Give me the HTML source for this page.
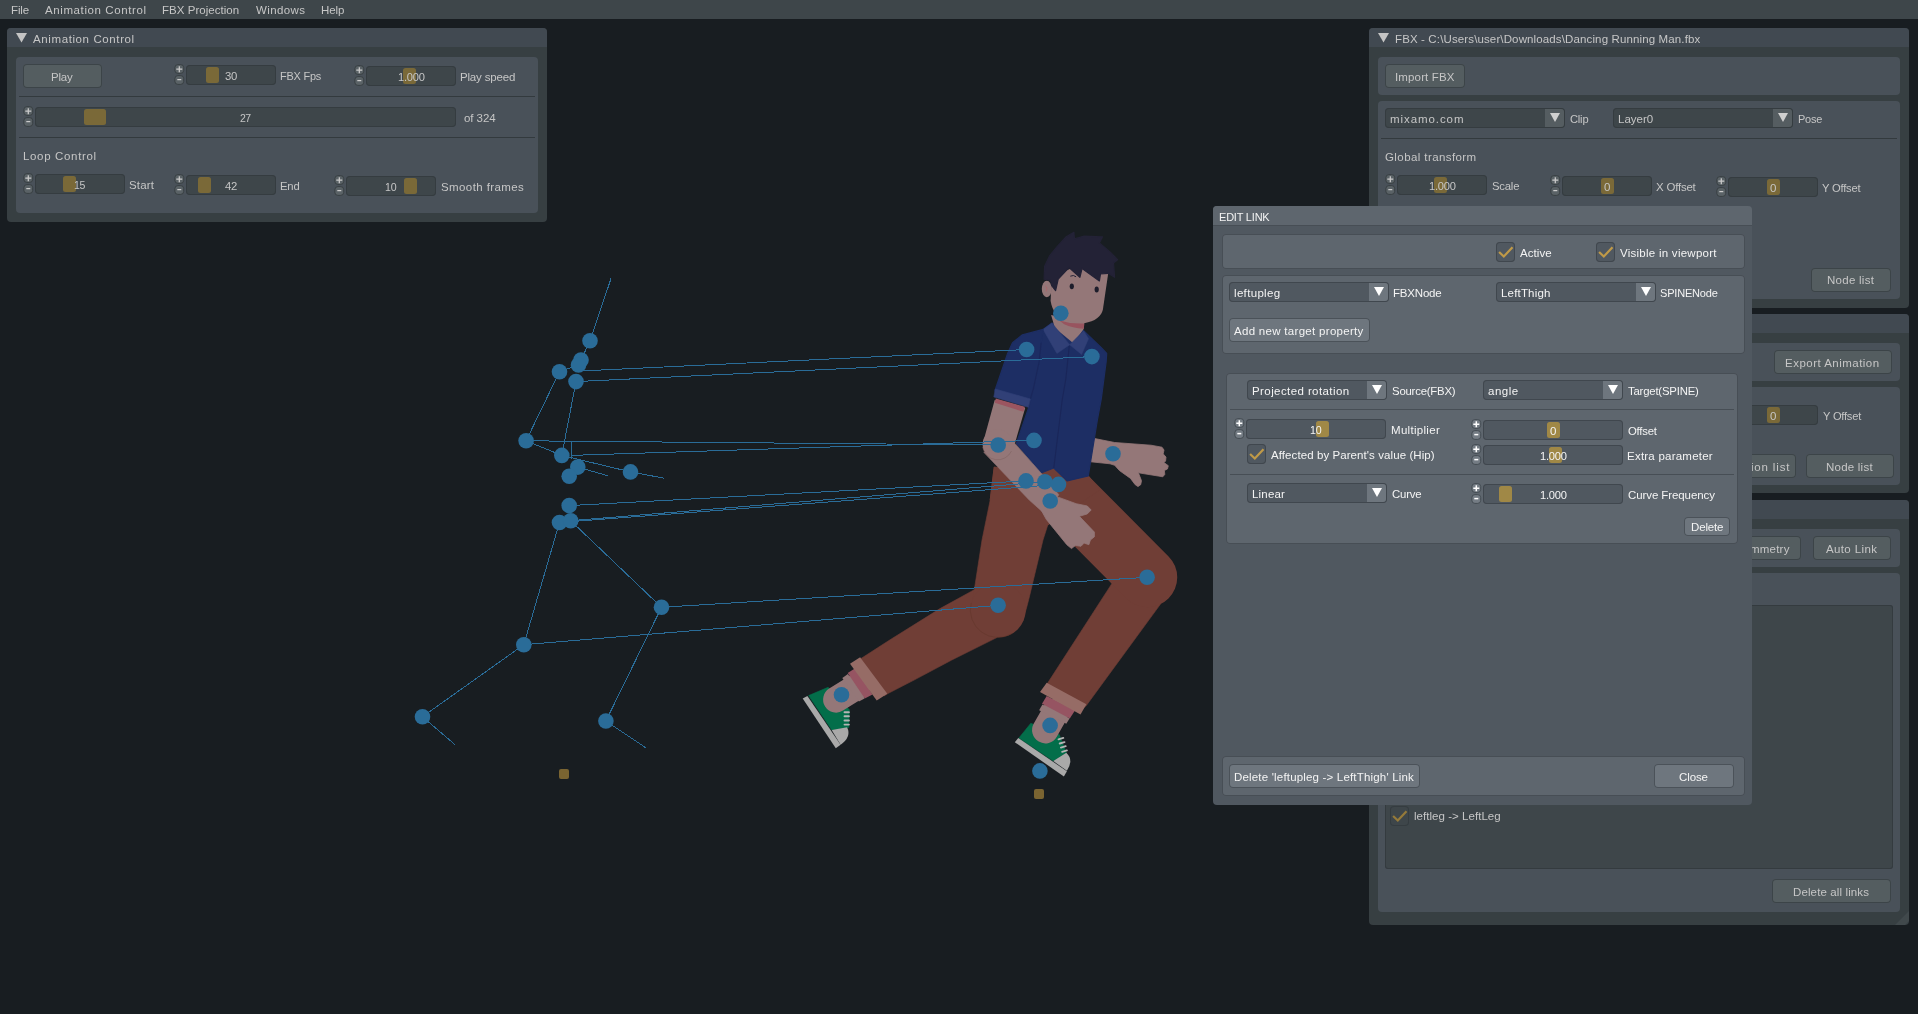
<!DOCTYPE html>
<html lang="en"><head><meta charset="utf-8"><title>FBX to Spine</title>
<style>
html,body{margin:0;padding:0;}
body{width:1918px;height:1014px;overflow:hidden;position:relative;background:#181d21;font-family:"Liberation Sans", "DejaVu Sans", sans-serif;font-size:11.5px;}
.b{position:absolute;display:block;}
.t{position:absolute;white-space:pre;line-height:16px;color:#c6c6c6;will-change:transform;}
.t.d{color:#f4f4f4;}
</style></head>
<body>
<nav aria-label="Main menu">
<div class="b" style="left:0px;top:0px;width:1918px;height:19px;background:#3e464a;"></div>
<span class="t" style="left:11.4px;top:2px;letter-spacing:-0.14px">File</span>
<span class="t" style="left:45.0px;top:2px;letter-spacing:0.60px">Animation Control</span>
<span class="t" style="left:162.3px;top:2px;letter-spacing:0.03px">FBX Projection</span>
<span class="t" style="left:256.0px;top:2px;letter-spacing:0.39px">Windows</span>
<span class="t" style="left:321.2px;top:2px;letter-spacing:-0.12px">Help</span>
</nav>
<main aria-label="Viewport">
<svg class="b" style="left:0;top:0" width="1918" height="1014" viewBox="0 0 1918 1014">
<polygon points="1094.6,438.5 1114.7,442.5 1151,445.2 1162,447.2 1164,450 1163.2,453.9 1166,457.1 1165.6,461 1164,462.6 1168.3,465.7 1167.5,468.9 1164.4,470.5 1164.8,474.4 1162.8,476.8 1158.1,476 1138.4,472.8 1141.5,480.7 1140.7,484.7 1138,486.6 1135.2,484.7 1130.5,478.4 1119.4,470.5 1114.7,465.3 1110,463.8 1088,461.5 1090,438" fill="#947778" stroke="#947778" stroke-width="0.8" stroke-linejoin="round" />
<polygon points="1113.1,581.7 1047,684 1046,688 1083,708 1086,706 1160.5,604.1 1150,575" fill="#703e36" stroke="#703e36" stroke-width="0.6" stroke-linejoin="round" />
<line x1="1056" y1="485.4" x2="1147.5" y2="577.4" stroke="#703e36" stroke-width="59.5" stroke-linecap="round"/>
<polygon points="1018.9,738.0 1030.8,723.3 1059.2,734.5 1066.3,752.8 1053.3,761.1" fill="#036e4a" stroke="#036e4a" stroke-width="0.6" stroke-linejoin="round" />
<line x1="1058.5" y1="739.3000000000001" x2="1063.3000000000002" y2="737.9" stroke="#b4b4b4" stroke-width="1.9" stroke-linecap="round"/>
<line x1="1059.6999999999998" y1="743.5" x2="1064.5" y2="742.0999999999999" stroke="#b4b4b4" stroke-width="1.9" stroke-linecap="round"/>
<line x1="1060.8999999999999" y1="747.6" x2="1065.7" y2="746.1999999999999" stroke="#b4b4b4" stroke-width="1.9" stroke-linecap="round"/>
<line x1="1062.1" y1="751.8000000000001" x2="1066.9" y2="750.4" stroke="#b4b4b4" stroke-width="1.9" stroke-linecap="round"/>
<path d="M1053.3,761.1 L1066.3,752.8 Q1074.0,759.9 1066.9,770.8 L1066.9,770.8 Z" fill="#a9a9a9"/>
<polygon points="1014.8,742.2 1018.3,738.0 1066.9,771.2 1063.9,776.5" fill="#a9a9a9" />
<line x1="1055.6" y1="712.0" x2="1045.3" y2="730.1" stroke="#947778" stroke-width="26.5" stroke-linecap="round"/>
<polygon points="1042.4,704.6 1069.6,718.5 1066.3,723.8 1039.1,710.2" fill="#947778" />
<polygon points="1042.0,703.7 1046.7,696.0 1075.1,710.2 1069.8,718.5" fill="#965462" />
<polygon points="1040.0,691.9 1046.7,682.8 1086.4,704.3 1080.5,714.4" fill="#966c66" />
<polygon points="994.2,467.1 1041,473 1053.8,468 1067.1,480.9 1088.3,475.9 1100,490 1047.8,525 1000,520 990.2,500" fill="#703e36" stroke="#703e36" stroke-width="1" stroke-linejoin="round" />
<polygon points="974.3,589.7 940,608.6 889.7,640 861,658.5 859,662 884,696 888,693.5 915,679.6 951.8,660 996.8,637.6 1010,610" fill="#703e36" stroke="#703e36" stroke-width="0.6" stroke-linejoin="round" />
<polygon points="994.2,467.1 990.2,500 982,540 974.3,589.7 971,608 1000,630 1022.8,620.5 1026.5,608 1028.8,599.2 1043,540 1047.8,525 1050,480" fill="#703e36" stroke="#703e36" stroke-width="0.6" stroke-linejoin="round" />
<circle cx="998.2" cy="610" r="27.5" fill="#703e36" />
<path d="M971.2,603 A27.5,27.5 0 0 0 1012,633.5" stroke="#5f3528" stroke-width="0.7" fill="none" opacity="0.7"/>
<polygon points="808.6,695.6 828.1,687.3 849.4,709.8 848.8,727.6 831.7,729.9" fill="#036e4a" stroke="#036e4a" stroke-width="0.6" stroke-linejoin="round" />
<line x1="844.5" y1="712.2" x2="848.9000000000001" y2="712.2" stroke="#b4b4b4" stroke-width="1.9" stroke-linecap="round"/>
<line x1="844.5" y1="716.3" x2="848.9000000000001" y2="716.3" stroke="#b4b4b4" stroke-width="1.9" stroke-linecap="round"/>
<line x1="844.5" y1="720.5" x2="848.9000000000001" y2="720.5" stroke="#b4b4b4" stroke-width="1.9" stroke-linecap="round"/>
<line x1="844.5" y1="724.6" x2="848.9000000000001" y2="724.6" stroke="#b4b4b4" stroke-width="1.9" stroke-linecap="round"/>
<path d="M831.7,729.9 L847.1,727.3 Q851.8,737.0 840.6,744.7 Z" fill="#a9a9a9"/>
<polygon points="802.7,698.6 807.4,695.9 840.6,744.7 835.8,748.3" fill="#a9a9a9" />
<line x1="857.1" y1="686.4" x2="836.1" y2="699.6" stroke="#947778" stroke-width="26" stroke-linecap="round"/>
<polygon points="847.9,674.1 864.6,698.5 858.9,701.5 842.3,677.9" fill="#947778" />
<polygon points="847.7,673.1 854.8,668.4 872.5,694.4 864.8,698.6" fill="#965462" />
<polygon points="850.0,663.7 860.1,657.2 887.3,693.8 876.7,700.4" fill="#966c66" />
<polygon points="1043.1,329.4 1052,323 1083.6,330.8 1101.3,347.6 1106.7,353.5 1106.2,361.4 1101.3,398.9 1097.4,420 1088.3,475.9 1067.1,480.9 1053.8,468 1041,473 1016.4,443.4 1029.2,405.9 1033.3,389 1039.2,361.4 1041.1,342.7" fill="#1d2e64" stroke="#1d2e64" stroke-width="1.2" stroke-linejoin="round" />
<polyline points="1069.3,345.6 1065.8,379.2 1062.2,400 1053.8,468" stroke="#1a2659" stroke-width="1.1" fill="none"/>
<polygon points="1051.1,315.0 1084.2,322.6 1083.7,329.1 1073.4,343.2 1054.9,328.0" fill="#947778" />
<path d="M1059.3,320.4 Q1071.2,324.2 1084.4,323.5 L1083.8,328.8 Q1072.3,328.0 1064.2,324.2 Z" fill="#98545f"/>
<polygon points="1043.1,329.4 1052,323 1069.7,344.7 1056.9,353.5" fill="#314077" stroke="#314077" stroke-width="0.5" stroke-linejoin="round" />
<polygon points="1083.6,330.8 1069.7,344.7 1081.6,354.5 1088.5,338.7" fill="#314077" stroke="#314077" stroke-width="0.5" stroke-linejoin="round" />
<ellipse cx="1046.8" cy="289" rx="5" ry="8.2" fill="#947778"/>
<path d="M1045.2,286 q2.6,1.2 1,5.5" stroke="#a8686c" stroke-width="1" fill="none"/>
<path d="M1051.7,277.1 L1050.6,300.9 Q1053.3,317.2 1068.0,320.7 L1084.2,323.3 Q1100.5,320.4 1102.9,309.6 L1108.3,272.7 L1078.8,265.1 Z" fill="#947778"/>
<polygon points="1044.1,279.2 1044.6,266.2 1049.5,255.9 1057.1,246.7 1065.8,237.1 1073.9,232.2 1074.5,238.9 1084.2,236.1 1102.5,236.9 1099.4,242.9 1110.3,252.1 1117.6,259.7 1113.5,263.0 1114.6,277.3 1108.3,273.3 1100.5,274.0 1099.4,281.0 1082.1,268.4 1079.9,277.3 1069.0,267.5 1058.2,279.2 1055.6,290.7 1051.7,285.7 1050.6,280.5" fill="#232236" stroke="#232236" stroke-width="1.2" stroke-linejoin="round" />
<polyline points="1070.3,276.2 1073.4,275.5 1076.1,276.8" stroke="#232236" stroke-width="1" fill="none"/>
<ellipse cx="1071.8" cy="286.3" rx="2.1" ry="2.9" fill="#1d1d2b"/>
<ellipse cx="1096.7" cy="289.5" rx="2.1" ry="2.9" fill="#1d1d2b"/>
<polygon points="1043.1,329.4 1022.4,334.8 1012.5,342.7 1007.6,353.5 994.8,391 1030.3,398.9 1033.3,389 1039.2,361.4 1041.1,342.7" fill="#1d2e64" stroke="#1d2e64" stroke-width="1.2" stroke-linejoin="round" />
<polyline points="1041.1,342.7 1039.2,361.4 1033.3,389 1030.3,398.9" stroke="#1a2659" stroke-width="0.9" fill="none"/>
<polygon points="994.7,400 1025.2,407.9 1014.9,443.4 1005,458 982.8,443.4" fill="#947778" />
<circle cx="997.8" cy="444.6" r="15.2" fill="#947778" />
<polygon points="983.8,452.3 1029.2,500 1046,515 1058.8,494.7 1041,473 1014.9,443.4" fill="#947778" stroke="#947778" stroke-width="0.6" stroke-linejoin="round" />
<path d="M982.7,447 A15.2,15.2 0 0 0 1011.5,451" stroke="#7d5f5c" stroke-width="0.6" fill="none" opacity="0.8"/>
<polygon points="995.8,398.4 1024.9,406.8 1023.4,411.7 994.8,402.8" fill="#9b5560" />
<polygon points="995.3,389 1030.3,398.9 1028.3,407.3 993.8,396.9" fill="#314077" stroke="#314077" stroke-width="0.6" stroke-linejoin="round" />
<polygon points="1043.1,500 1058.9,497.4 1076.2,503.7 1087.3,506 1091.2,510 1087.3,513.9 1079.4,516.3 1094.4,532.1 1094.4,536.8 1090.4,540 1088.9,544.7 1084.1,543.1 1081,546.3 1075.4,545.5 1071.5,548.6 1066.8,544.7 1046.3,519.4 1040,508" fill="#947778" stroke="#947778" stroke-width="0.8" stroke-linejoin="round" />
<g stroke="#2a6c98" stroke-width="1" fill="none" shape-rendering="crispEdges">
<line x1="611" y1="278.6" x2="590" y2="340.8"/>
<line x1="590" y1="340.8" x2="581" y2="360"/>
<line x1="559.5" y1="371.8" x2="578.5" y2="365"/>
<line x1="559.5" y1="371.8" x2="526.1" y2="440.8"/>
<line x1="576" y1="381.6" x2="561.8" y2="455.4"/>
<line x1="526.1" y1="440.8" x2="561.8" y2="455.4"/>
<line x1="561.8" y1="455.4" x2="630.5" y2="471.9"/>
<line x1="630.5" y1="471.9" x2="663.7" y2="478.1"/>
<line x1="577.8" y1="467.1" x2="607.9" y2="475.8"/>
<line x1="571" y1="441" x2="571" y2="458.6"/>
<line x1="559.5" y1="522.5" x2="523.8" y2="644.7"/>
<line x1="570.7" y1="520.7" x2="661.5" y2="607.3"/>
<line x1="523.8" y1="644.7" x2="422.5" y2="716.7"/>
<line x1="661.5" y1="607.3" x2="605.9" y2="721"/>
<line x1="422.5" y1="716.7" x2="454.9" y2="744.6"/>
<line x1="605.9" y1="721" x2="645.7" y2="747.7"/>
<line x1="580.8" y1="371" x2="1026.6" y2="349.5"/>
<line x1="576" y1="381.6" x2="1091.9" y2="356.6"/>
<line x1="526.1" y1="440.8" x2="998.2" y2="445"/>
<line x1="571" y1="455.4" x2="1034" y2="440.4"/>
<line x1="569.2" y1="505.6" x2="1026" y2="480.9"/>
<line x1="570.7" y1="520.7" x2="1044.9" y2="481.8"/>
<line x1="559.5" y1="522.5" x2="1058.5" y2="484.4"/>
<line x1="523.8" y1="644.7" x2="998.1" y2="605.3"/>
<line x1="661.5" y1="607.3" x2="1147.1" y2="577.3"/>
</g>
<g fill="#2a6c98">
<circle cx="590" cy="340.8" r="7.8"/>
<circle cx="581" cy="360" r="7.8"/>
<circle cx="578.5" cy="365" r="7.8"/>
<circle cx="559.5" cy="371.8" r="7.8"/>
<circle cx="576" cy="381.6" r="7.8"/>
<circle cx="526.1" cy="440.8" r="7.8"/>
<circle cx="561.8" cy="455.4" r="7.8"/>
<circle cx="577.8" cy="467.1" r="7.8"/>
<circle cx="569.2" cy="476.3" r="7.8"/>
<circle cx="630.5" cy="471.9" r="7.8"/>
<circle cx="569.2" cy="505.6" r="7.8"/>
<circle cx="559.5" cy="522.5" r="7.8"/>
<circle cx="570.7" cy="520.7" r="7.8"/>
<circle cx="523.8" cy="644.7" r="7.8"/>
<circle cx="661.5" cy="607.3" r="7.8"/>
<circle cx="422.5" cy="716.7" r="7.8"/>
<circle cx="605.9" cy="721" r="7.8"/>
<circle cx="1060.8" cy="313.2" r="7.8"/>
<circle cx="1026.6" cy="349.5" r="7.8"/>
<circle cx="1091.9" cy="356.6" r="7.8"/>
<circle cx="998.2" cy="445" r="7.8"/>
<circle cx="1034" cy="440.4" r="7.8"/>
<circle cx="1113" cy="453.7" r="7.8"/>
<circle cx="1026" cy="480.9" r="7.8"/>
<circle cx="1044.9" cy="481.8" r="7.8"/>
<circle cx="1058.5" cy="484.4" r="7.8"/>
<circle cx="1050.2" cy="501" r="7.8"/>
<circle cx="1147.1" cy="577.3" r="7.8"/>
<circle cx="998.1" cy="605.3" r="7.8"/>
<circle cx="841.5" cy="694.8" r="7.8"/>
<circle cx="1050.1" cy="725.4" r="7.8"/>
<circle cx="1039.9" cy="770.9" r="7.8"/>
</g>
<rect x="559" y="769" width="10" height="10" rx="2" fill="#7a6431"/>
<rect x="1034" y="789" width="10" height="10" rx="2" fill="#7a6431"/>
</svg>
</main>
<section aria-label="Animation Control">
<div class="b" style="left:7px;top:28px;width:540px;height:194px;background:#373f42;border-radius:4px;"></div>
<div class="b" style="left:7px;top:28px;width:540px;height:19px;background:#414951;border-radius:4px 4px 0 0;"></div>
<svg class="b" style="left:16px;top:33px" width="11" height="9.5" viewBox="0 0 11 9.5"><polygon points="0,0 11,0 5.5,9.5" fill="#c4c4c4"/></svg>
<span class="t" style="left:33.0px;top:31px;letter-spacing:0.61px">Animation Control</span>
<div class="b" style="left:16px;top:57px;width:522px;height:156px;background:#495159;border-radius:4px;"></div>
<div class="b" style="left:23px;top:64px;width:79px;height:24px;background:#545d60;border-radius:4px;box-shadow:inset 0 0 0 1px #3c4448;"></div>
<span class="t" style="left:51.2px;top:69px;font-size:11.46px;letter-spacing:-0.20px">Play</span>
<svg class="b" style="left:174px;top:64px" width="11" height="22" viewBox="0 0 11 22"><rect x="0.9" y="0.6" width="8.8" height="8.8" rx="3" fill="#5a6266" stroke="#353c40" stroke-width="0.9"/><rect x="0.9" y="11.6" width="8.8" height="8.8" rx="3" fill="#5a6266" stroke="#353c40" stroke-width="0.9"/><path d="M2.3 5.2H8.3M5.3 2.2V8.2" stroke="#cacaca" stroke-width="1.25" fill="none"/><path d="M3.3 15.6H7.3" stroke="#cacaca" stroke-width="1.25" fill="none"/></svg>
<div class="b" style="left:186px;top:65px;width:90px;height:20px;background:#3e464a;border-radius:4px;box-shadow:inset 0 0 0 1px #353c40;"></div>
<div class="b" style="left:206px;top:67px;width:13px;height:16px;background:#7a6938;border-radius:2.5px;"></div>
<span class="t" style="left:224.8px;top:68px;font-size:11.32px;letter-spacing:-0.20px">30</span>
<span class="t" style="left:280.0px;top:68px;font-size:10.95px;letter-spacing:-0.20px">FBX Fps</span>
<svg class="b" style="left:354px;top:65px" width="11" height="22" viewBox="0 0 11 22"><rect x="0.9" y="0.6" width="8.8" height="8.8" rx="3" fill="#5a6266" stroke="#353c40" stroke-width="0.9"/><rect x="0.9" y="11.6" width="8.8" height="8.8" rx="3" fill="#5a6266" stroke="#353c40" stroke-width="0.9"/><path d="M2.3 5.2H8.3M5.3 2.2V8.2" stroke="#cacaca" stroke-width="1.25" fill="none"/><path d="M3.3 15.6H7.3" stroke="#cacaca" stroke-width="1.25" fill="none"/></svg>
<div class="b" style="left:366px;top:66px;width:90px;height:20px;background:#3e464a;border-radius:4px;box-shadow:inset 0 0 0 1px #353c40;"></div>
<div class="b" style="left:403px;top:68px;width:13px;height:16px;background:#7a6938;border-radius:2.5px;"></div>
<span class="t" style="left:397.5px;top:69px;font-size:11.11px;letter-spacing:-0.20px">1.000</span>
<span class="t" style="left:460.2px;top:69px;letter-spacing:-0.18px">Play speed</span>
<div class="b" style="left:19px;top:96px;width:516px;height:1px;background:#333a3e;"></div>
<svg class="b" style="left:23px;top:106px" width="11" height="22" viewBox="0 0 11 22"><rect x="0.9" y="0.6" width="8.8" height="8.8" rx="3" fill="#5a6266" stroke="#353c40" stroke-width="0.9"/><rect x="0.9" y="11.6" width="8.8" height="8.8" rx="3" fill="#5a6266" stroke="#353c40" stroke-width="0.9"/><path d="M2.3 5.2H8.3M5.3 2.2V8.2" stroke="#cacaca" stroke-width="1.25" fill="none"/><path d="M3.3 15.6H7.3" stroke="#cacaca" stroke-width="1.25" fill="none"/></svg>
<div class="b" style="left:35px;top:107px;width:421px;height:20px;background:#3e464a;border-radius:4px;box-shadow:inset 0 0 0 1px #353c40;"></div>
<div class="b" style="left:84px;top:109px;width:22px;height:16px;background:#7a6938;border-radius:2.5px;"></div>
<span class="t" style="left:240.0px;top:110px;font-size:10.50px;letter-spacing:-0.68px">27</span>
<span class="t" style="left:463.7px;top:110px;letter-spacing:-0.06px">of 324</span>
<div class="b" style="left:19px;top:137px;width:516px;height:1px;background:#333a3e;"></div>
<span class="t" style="left:23.2px;top:148px;letter-spacing:0.66px">Loop Control</span>
<svg class="b" style="left:23px;top:173px" width="11" height="22" viewBox="0 0 11 22"><rect x="0.9" y="0.6" width="8.8" height="8.8" rx="3" fill="#5a6266" stroke="#353c40" stroke-width="0.9"/><rect x="0.9" y="11.6" width="8.8" height="8.8" rx="3" fill="#5a6266" stroke="#353c40" stroke-width="0.9"/><path d="M2.3 5.2H8.3M5.3 2.2V8.2" stroke="#cacaca" stroke-width="1.25" fill="none"/><path d="M3.3 15.6H7.3" stroke="#cacaca" stroke-width="1.25" fill="none"/></svg>
<div class="b" style="left:35px;top:174px;width:90px;height:20px;background:#3e464a;border-radius:4px;box-shadow:inset 0 0 0 1px #353c40;"></div>
<div class="b" style="left:63px;top:176px;width:13px;height:16px;background:#7a6938;border-radius:2.5px;"></div>
<span class="t" style="left:74.3px;top:177px;font-size:10.50px;letter-spacing:-0.28px">15</span>
<span class="t" style="left:129.4px;top:177px;letter-spacing:0.15px">Start</span>
<svg class="b" style="left:174px;top:174px" width="11" height="22" viewBox="0 0 11 22"><rect x="0.9" y="0.6" width="8.8" height="8.8" rx="3" fill="#5a6266" stroke="#353c40" stroke-width="0.9"/><rect x="0.9" y="11.6" width="8.8" height="8.8" rx="3" fill="#5a6266" stroke="#353c40" stroke-width="0.9"/><path d="M2.3 5.2H8.3M5.3 2.2V8.2" stroke="#cacaca" stroke-width="1.25" fill="none"/><path d="M3.3 15.6H7.3" stroke="#cacaca" stroke-width="1.25" fill="none"/></svg>
<div class="b" style="left:186px;top:175px;width:90px;height:20px;background:#3e464a;border-radius:4px;box-shadow:inset 0 0 0 1px #353c40;"></div>
<div class="b" style="left:198px;top:177px;width:13px;height:16px;background:#7a6938;border-radius:2.5px;"></div>
<span class="t" style="left:224.8px;top:178px;font-size:11.32px;letter-spacing:-0.20px">42</span>
<span class="t" style="left:280.0px;top:178px;font-size:11.29px;letter-spacing:-0.20px">End</span>
<svg class="b" style="left:334px;top:175px" width="11" height="22" viewBox="0 0 11 22"><rect x="0.9" y="0.6" width="8.8" height="8.8" rx="3" fill="#5a6266" stroke="#353c40" stroke-width="0.9"/><rect x="0.9" y="11.6" width="8.8" height="8.8" rx="3" fill="#5a6266" stroke="#353c40" stroke-width="0.9"/><path d="M2.3 5.2H8.3M5.3 2.2V8.2" stroke="#cacaca" stroke-width="1.25" fill="none"/><path d="M3.3 15.6H7.3" stroke="#cacaca" stroke-width="1.25" fill="none"/></svg>
<div class="b" style="left:346px;top:176px;width:90px;height:20px;background:#3e464a;border-radius:4px;box-shadow:inset 0 0 0 1px #353c40;"></div>
<div class="b" style="left:404px;top:178px;width:13px;height:16px;background:#7a6938;border-radius:2.5px;"></div>
<span class="t" style="left:385.2px;top:179px;font-size:10.60px;letter-spacing:-0.20px">10</span>
<span class="t" style="left:440.5px;top:179px;letter-spacing:0.40px">Smooth frames</span>
</section>
<section aria-label="FBX">
<div class="b" style="left:1369px;top:28px;width:540px;height:280px;background:#373f42;border-radius:4px;"></div>
<div class="b" style="left:1369px;top:28px;width:540px;height:19px;background:#414951;border-radius:4px 4px 0 0;"></div>
<svg class="b" style="left:1378px;top:33px" width="11" height="9.5" viewBox="0 0 11 9.5"><polygon points="0,0 11,0 5.5,9.5" fill="#c4c4c4"/></svg>
<span class="t" style="left:1394.9px;top:31px;letter-spacing:0.13px">FBX - C:\Users\user\Downloads\Dancing Running Man.fbx</span>
<div class="b" style="left:1378px;top:57px;width:522px;height:38px;background:#495159;border-radius:4px;"></div>
<div class="b" style="left:1385px;top:64px;width:80px;height:24px;background:#545d60;border-radius:4px;box-shadow:inset 0 0 0 1px #3c4448;"></div>
<span class="t" style="left:1395.2px;top:69px;letter-spacing:0.14px">Import FBX</span>
<div class="b" style="left:1378px;top:101px;width:522px;height:198px;background:#495159;border-radius:4px;"></div>
<div class="b" style="left:1385px;top:108px;width:180px;height:20px;background:#3e464a;border-radius:4px;box-shadow:inset 0 0 0 1px #353c40;"></div>
<div class="b" style="left:1545px;top:109px;width:19px;height:18px;background:#555d61;border-radius:0 3px 3px 0;"></div>
<svg class="b" style="left:1550px;top:113px" width="10" height="9" viewBox="0 0 10 9"><polygon points="0,0 10,0 5.0,9" fill="#d0d0d0"/></svg>
<span class="t" style="left:1390.0px;top:111px;letter-spacing:0.92px">mixamo.com</span>
<span class="t" style="left:1569.6px;top:111px;font-size:11.14px;letter-spacing:-0.20px">Clip</span>
<div class="b" style="left:1613px;top:108px;width:180px;height:20px;background:#3e464a;border-radius:4px;box-shadow:inset 0 0 0 1px #353c40;"></div>
<div class="b" style="left:1773px;top:109px;width:19px;height:18px;background:#555d61;border-radius:0 3px 3px 0;"></div>
<svg class="b" style="left:1778px;top:113px" width="10" height="9" viewBox="0 0 10 9"><polygon points="0,0 10,0 5.0,9" fill="#d0d0d0"/></svg>
<span class="t" style="left:1618.0px;top:111px;letter-spacing:-0.01px">Layer0</span>
<span class="t" style="left:1797.5px;top:111px;font-size:10.97px;letter-spacing:-0.20px">Pose</span>
<div class="b" style="left:1381px;top:138px;width:516px;height:1px;background:#333a3e;"></div>
<span class="t" style="left:1385.3px;top:149px;letter-spacing:0.41px">Global transform</span>
<svg class="b" style="left:1385px;top:174px" width="11" height="22" viewBox="0 0 11 22"><rect x="0.9" y="0.6" width="8.8" height="8.8" rx="3" fill="#5a6266" stroke="#353c40" stroke-width="0.9"/><rect x="0.9" y="11.6" width="8.8" height="8.8" rx="3" fill="#5a6266" stroke="#353c40" stroke-width="0.9"/><path d="M2.3 5.2H8.3M5.3 2.2V8.2" stroke="#cacaca" stroke-width="1.25" fill="none"/><path d="M3.3 15.6H7.3" stroke="#cacaca" stroke-width="1.25" fill="none"/></svg>
<div class="b" style="left:1397px;top:175px;width:90px;height:20px;background:#3e464a;border-radius:4px;box-shadow:inset 0 0 0 1px #353c40;"></div>
<div class="b" style="left:1434px;top:177px;width:13px;height:16px;background:#7a6938;border-radius:2.5px;"></div>
<span class="t" style="left:1428.5px;top:178px;font-size:11.11px;letter-spacing:-0.20px">1.000</span>
<span class="t" style="left:1491.5px;top:178px;font-size:11.31px;letter-spacing:-0.20px">Scale</span>
<svg class="b" style="left:1550px;top:175px" width="11" height="22" viewBox="0 0 11 22"><rect x="0.9" y="0.6" width="8.8" height="8.8" rx="3" fill="#5a6266" stroke="#353c40" stroke-width="0.9"/><rect x="0.9" y="11.6" width="8.8" height="8.8" rx="3" fill="#5a6266" stroke="#353c40" stroke-width="0.9"/><path d="M2.3 5.2H8.3M5.3 2.2V8.2" stroke="#cacaca" stroke-width="1.25" fill="none"/><path d="M3.3 15.6H7.3" stroke="#cacaca" stroke-width="1.25" fill="none"/></svg>
<div class="b" style="left:1562px;top:176px;width:90px;height:20px;background:#3e464a;border-radius:4px;box-shadow:inset 0 0 0 1px #353c40;"></div>
<div class="b" style="left:1601px;top:178px;width:13px;height:16px;background:#7a6938;border-radius:2.5px;"></div>
<span class="t" style="left:1603.8px;top:179px;letter-spacing:0.45px">0</span>
<span class="t" style="left:1656.2px;top:179px;font-size:11.46px;letter-spacing:-0.20px">X Offset</span>
<svg class="b" style="left:1716px;top:176px" width="11" height="22" viewBox="0 0 11 22"><rect x="0.9" y="0.6" width="8.8" height="8.8" rx="3" fill="#5a6266" stroke="#353c40" stroke-width="0.9"/><rect x="0.9" y="11.6" width="8.8" height="8.8" rx="3" fill="#5a6266" stroke="#353c40" stroke-width="0.9"/><path d="M2.3 5.2H8.3M5.3 2.2V8.2" stroke="#cacaca" stroke-width="1.25" fill="none"/><path d="M3.3 15.6H7.3" stroke="#cacaca" stroke-width="1.25" fill="none"/></svg>
<div class="b" style="left:1728px;top:177px;width:90px;height:20px;background:#3e464a;border-radius:4px;box-shadow:inset 0 0 0 1px #353c40;"></div>
<div class="b" style="left:1767px;top:179px;width:13px;height:16px;background:#7a6938;border-radius:2.5px;"></div>
<span class="t" style="left:1769.8px;top:180px;letter-spacing:0.45px">0</span>
<span class="t" style="left:1822.3px;top:180px;font-size:11.21px;letter-spacing:-0.20px">Y Offset</span>
<div class="b" style="left:1811px;top:268px;width:80px;height:24px;background:#545d60;border-radius:4px;box-shadow:inset 0 0 0 1px #3c4448;"></div>
<span class="t" style="left:1827.2px;top:272px;letter-spacing:0.27px">Node list</span>
</section>
<section aria-label="Spine">
<div class="b" style="left:1369px;top:314px;width:540px;height:179px;background:#373f42;border-radius:4px;"></div>
<div class="b" style="left:1369px;top:314px;width:540px;height:19px;background:#414951;border-radius:4px 4px 0 0;"></div>
<svg class="b" style="left:1378px;top:319px" width="11" height="9.5" viewBox="0 0 11 9.5"><polygon points="0,0 11,0 5.5,9.5" fill="#c4c4c4"/></svg>
<div class="b" style="left:1378px;top:343px;width:522px;height:38px;background:#495159;border-radius:4px;"></div>
<div class="b" style="left:1774px;top:350px;width:118px;height:24px;background:#545d60;border-radius:4px;box-shadow:inset 0 0 0 1px #3c4448;"></div>
<span class="t" style="left:1785.3px;top:355px;letter-spacing:0.48px">Export Animation</span>
<div class="b" style="left:1378px;top:387px;width:522px;height:98px;background:#495159;border-radius:4px;"></div>
<svg class="b" style="left:1716px;top:404px" width="11" height="22" viewBox="0 0 11 22"><rect x="0.9" y="0.6" width="8.8" height="8.8" rx="3" fill="#5a6266" stroke="#353c40" stroke-width="0.9"/><rect x="0.9" y="11.6" width="8.8" height="8.8" rx="3" fill="#5a6266" stroke="#353c40" stroke-width="0.9"/><path d="M2.3 5.2H8.3M5.3 2.2V8.2" stroke="#cacaca" stroke-width="1.25" fill="none"/><path d="M3.3 15.6H7.3" stroke="#cacaca" stroke-width="1.25" fill="none"/></svg>
<div class="b" style="left:1728px;top:405px;width:90px;height:20px;background:#3e464a;border-radius:4px;box-shadow:inset 0 0 0 1px #353c40;"></div>
<div class="b" style="left:1767px;top:407px;width:13px;height:16px;background:#7a6938;border-radius:2.5px;"></div>
<span class="t" style="left:1769.8px;top:408px;letter-spacing:0.45px">0</span>
<span class="t" style="left:1822.6px;top:408px;font-size:11.10px;letter-spacing:-0.20px">Y Offset</span>
<div class="b" style="left:1700px;top:454px;width:96px;height:24px;background:#545d60;border-radius:4px;box-shadow:inset 0 0 0 1px #3c4448;"></div>
<span class="t" style="left:1709.5px;top:459px;letter-spacing:0.85px">Animation list</span>
<div class="b" style="left:1806px;top:454px;width:88px;height:24px;background:#545d60;border-radius:4px;box-shadow:inset 0 0 0 1px #3c4448;"></div>
<span class="t" style="left:1826.2px;top:459px;letter-spacing:0.23px">Node list</span>
</section>
<section aria-label="Links">
<div class="b" style="left:1369px;top:500px;width:540px;height:425px;background:#373f42;border-radius:4px;"></div>
<div class="b" style="left:1369px;top:500px;width:540px;height:19px;background:#414951;border-radius:4px 4px 0 0;"></div>
<svg class="b" style="left:1378px;top:505px" width="11" height="9.5" viewBox="0 0 11 9.5"><polygon points="0,0 11,0 5.5,9.5" fill="#c4c4c4"/></svg>
<div class="b" style="left:1378px;top:529px;width:522px;height:38px;background:#495159;border-radius:4px;"></div>
<div class="b" style="left:1700px;top:536px;width:101px;height:24px;background:#545d60;border-radius:4px;box-shadow:inset 0 0 0 1px #3c4448;"></div>
<span class="t" style="left:1735.5px;top:541px;letter-spacing:0.24px">Symmetry</span>
<div class="b" style="left:1813px;top:536px;width:78px;height:24px;background:#545d60;border-radius:4px;box-shadow:inset 0 0 0 1px #3c4448;"></div>
<span class="t" style="left:1825.9px;top:541px;letter-spacing:0.37px">Auto Link</span>
<div class="b" style="left:1378px;top:573px;width:522px;height:339px;background:#495159;border-radius:4px;"></div>
<div class="b" style="left:1385px;top:605px;width:508px;height:264px;background:#3e464a;border-radius:3px;box-shadow:inset 0 0 0 1px #343b3f;"></div>
<div class="b" style="left:1390px;top:806px;width:19px;height:20px;background:#3e464a;border-radius:4px;box-shadow:inset 0 0 0 1px #353c40;"></div>
<svg class="b" style="left:1390px;top:806px" width="19" height="20" viewBox="0 0 19 20"><path d="M3.1 10L7.8 14.5L16.5 5.3" stroke="#957a3a" stroke-width="2.2" fill="none"/></svg>
<span class="t" style="left:1414.3px;top:808px;letter-spacing:0.04px">leftleg -&gt; LeftLeg</span>
<div class="b" style="left:1772px;top:879px;width:119px;height:24px;background:#545d60;border-radius:4px;box-shadow:inset 0 0 0 1px #3c4448;"></div>
<span class="t" style="left:1793.3px;top:884px;letter-spacing:0.12px">Delete all links</span>
<svg class="b" style="left:1895px;top:911px" width="14" height="14" viewBox="0 0 14 14"><polygon points="14,0 14,10 10,14 0,14" fill="#41494c"/></svg>
</section>
<section role="dialog" aria-label="Edit link">
<div class="b" style="left:1213px;top:206px;width:539px;height:599px;background:#505860;border-radius:4px;"></div>
<div class="b" style="left:1213px;top:206px;width:539px;height:20px;background:#5e666e;border-radius:4px 4px 0 0;border-bottom:1px solid #474e55;box-sizing:border-box;"></div>
<span class="t d" style="left:1219.3px;top:209px;font-size:10.99px;letter-spacing:-0.20px">EDIT LINK</span>
<div class="b" style="left:1222px;top:234px;width:523px;height:35px;background:#5e666e;border-radius:4px;box-shadow:inset 0 0 0 1px #474e55;"></div>
<div class="b" style="left:1496px;top:242px;width:19px;height:20px;background:#505860;border-radius:4px;box-shadow:inset 0 0 0 1px #40474e;"></div>
<svg class="b" style="left:1496px;top:242px" width="19" height="20" viewBox="0 0 19 20"><path d="M3.1 10L7.8 14.5L16.5 5.3" stroke="#c09a48" stroke-width="2.2" fill="none"/></svg>
<span class="t d" style="left:1520.4px;top:245px;letter-spacing:0.07px">Active</span>
<div class="b" style="left:1596px;top:242px;width:19px;height:20px;background:#505860;border-radius:4px;box-shadow:inset 0 0 0 1px #40474e;"></div>
<svg class="b" style="left:1596px;top:242px" width="19" height="20" viewBox="0 0 19 20"><path d="M3.1 10L7.8 14.5L16.5 5.3" stroke="#c09a48" stroke-width="2.2" fill="none"/></svg>
<span class="t d" style="left:1620.2px;top:245px;letter-spacing:0.26px">Visible in viewport</span>
<div class="b" style="left:1222px;top:275px;width:523px;height:79px;background:#5e666e;border-radius:4px;box-shadow:inset 0 0 0 1px #474e55;"></div>
<div class="b" style="left:1229px;top:282px;width:160px;height:20px;background:#505860;border-radius:4px;box-shadow:inset 0 0 0 1px #40474e;"></div>
<div class="b" style="left:1369px;top:283px;width:19px;height:18px;background:#6e767e;border-radius:0 3px 3px 0;"></div>
<svg class="b" style="left:1374px;top:287px" width="10" height="9" viewBox="0 0 10 9"><polygon points="0,0 10,0 5.0,9" fill="#ffffff"/></svg>
<span class="t d" style="left:1234.0px;top:285px;letter-spacing:0.33px">leftupleg</span>
<span class="t d" style="left:1393.2px;top:285px;letter-spacing:-0.19px">FBXNode</span>
<div class="b" style="left:1496px;top:282px;width:160px;height:20px;background:#505860;border-radius:4px;box-shadow:inset 0 0 0 1px #40474e;"></div>
<div class="b" style="left:1636px;top:283px;width:19px;height:18px;background:#6e767e;border-radius:0 3px 3px 0;"></div>
<svg class="b" style="left:1641px;top:287px" width="10" height="9" viewBox="0 0 10 9"><polygon points="0,0 10,0 5.0,9" fill="#ffffff"/></svg>
<span class="t d" style="left:1501.0px;top:285px;letter-spacing:0.18px">LeftThigh</span>
<span class="t d" style="left:1660.2px;top:285px;font-size:11.03px;letter-spacing:-0.20px">SPINENode</span>
<div class="b" style="left:1229px;top:318px;width:141px;height:24px;background:#6e767e;border-radius:4px;box-shadow:inset 0 0 0 1px #4b5259;"></div>
<span class="t d" style="left:1234.2px;top:323px;letter-spacing:0.30px">Add new target property</span>
<div class="b" style="left:1226px;top:373px;width:512px;height:171px;background:#5e666e;border-radius:4px;box-shadow:inset 0 0 0 1px #474e55;"></div>
<div class="b" style="left:1247px;top:380px;width:140px;height:20px;background:#505860;border-radius:4px;box-shadow:inset 0 0 0 1px #40474e;"></div>
<div class="b" style="left:1367px;top:381px;width:19px;height:18px;background:#6e767e;border-radius:0 3px 3px 0;"></div>
<svg class="b" style="left:1372px;top:385px" width="10" height="9" viewBox="0 0 10 9"><polygon points="0,0 10,0 5.0,9" fill="#ffffff"/></svg>
<span class="t d" style="left:1252.0px;top:383px;letter-spacing:0.41px">Projected rotation</span>
<span class="t d" style="left:1391.6px;top:383px;font-size:11.37px;letter-spacing:-0.20px">Source(FBX)</span>
<div class="b" style="left:1483px;top:380px;width:140px;height:20px;background:#505860;border-radius:4px;box-shadow:inset 0 0 0 1px #40474e;"></div>
<div class="b" style="left:1603px;top:381px;width:19px;height:18px;background:#6e767e;border-radius:0 3px 3px 0;"></div>
<svg class="b" style="left:1608px;top:385px" width="10" height="9" viewBox="0 0 10 9"><polygon points="0,0 10,0 5.0,9" fill="#ffffff"/></svg>
<span class="t d" style="left:1488.0px;top:383px;letter-spacing:0.49px">angle</span>
<span class="t d" style="left:1627.6px;top:383px;font-size:11.37px;letter-spacing:-0.20px">Target(SPINE)</span>
<div class="b" style="left:1230px;top:409px;width:504px;height:1px;background:#474e55;"></div>
<svg class="b" style="left:1234px;top:418px" width="11" height="22" viewBox="0 0 11 22"><rect x="0.9" y="0.6" width="8.8" height="8.8" rx="3" fill="#747c84" stroke="#40474e" stroke-width="0.9"/><rect x="0.9" y="11.6" width="8.8" height="8.8" rx="3" fill="#747c84" stroke="#40474e" stroke-width="0.9"/><path d="M2.3 5.2H8.3M5.3 2.2V8.2" stroke="#ffffff" stroke-width="1.5" fill="none"/><path d="M3.3 15.6H7.3" stroke="#ffffff" stroke-width="1.5" fill="none"/></svg>
<div class="b" style="left:1246px;top:419px;width:140px;height:20px;background:#505860;border-radius:4px;box-shadow:inset 0 0 0 1px #40474e;"></div>
<div class="b" style="left:1316px;top:421px;width:13px;height:16px;background:#a08846;border-radius:2.5px;"></div>
<span class="t d" style="left:1310.2px;top:422px;font-size:10.60px;letter-spacing:-0.20px">10</span>
<span class="t d" style="left:1390.5px;top:422px;letter-spacing:0.30px">Multiplier</span>
<svg class="b" style="left:1471px;top:419px" width="11" height="22" viewBox="0 0 11 22"><rect x="0.9" y="0.6" width="8.8" height="8.8" rx="3" fill="#747c84" stroke="#40474e" stroke-width="0.9"/><rect x="0.9" y="11.6" width="8.8" height="8.8" rx="3" fill="#747c84" stroke="#40474e" stroke-width="0.9"/><path d="M2.3 5.2H8.3M5.3 2.2V8.2" stroke="#ffffff" stroke-width="1.5" fill="none"/><path d="M3.3 15.6H7.3" stroke="#ffffff" stroke-width="1.5" fill="none"/></svg>
<div class="b" style="left:1483px;top:420px;width:140px;height:20px;background:#505860;border-radius:4px;box-shadow:inset 0 0 0 1px #40474e;"></div>
<div class="b" style="left:1547px;top:422px;width:13px;height:16px;background:#a08846;border-radius:2.5px;"></div>
<span class="t d" style="left:1549.8px;top:423px;letter-spacing:0.45px">0</span>
<span class="t d" style="left:1627.7px;top:423px;font-size:11.32px;letter-spacing:-0.20px">Offset</span>
<div class="b" style="left:1247px;top:444px;width:19px;height:20px;background:#505860;border-radius:4px;box-shadow:inset 0 0 0 1px #40474e;"></div>
<svg class="b" style="left:1247px;top:444px" width="19" height="20" viewBox="0 0 19 20"><path d="M3.1 10L7.8 14.5L16.5 5.3" stroke="#c09a48" stroke-width="2.2" fill="none"/></svg>
<span class="t d" style="left:1271.0px;top:447px;letter-spacing:0.08px">Affected by Parent&#x27;s value (Hip)</span>
<svg class="b" style="left:1471px;top:444px" width="11" height="22" viewBox="0 0 11 22"><rect x="0.9" y="0.6" width="8.8" height="8.8" rx="3" fill="#747c84" stroke="#40474e" stroke-width="0.9"/><rect x="0.9" y="11.6" width="8.8" height="8.8" rx="3" fill="#747c84" stroke="#40474e" stroke-width="0.9"/><path d="M2.3 5.2H8.3M5.3 2.2V8.2" stroke="#ffffff" stroke-width="1.5" fill="none"/><path d="M3.3 15.6H7.3" stroke="#ffffff" stroke-width="1.5" fill="none"/></svg>
<div class="b" style="left:1483px;top:445px;width:140px;height:20px;background:#505860;border-radius:4px;box-shadow:inset 0 0 0 1px #40474e;"></div>
<div class="b" style="left:1548.5px;top:447px;width:13.0px;height:16px;background:#a08846;border-radius:2.5px;"></div>
<span class="t d" style="left:1539.5px;top:448px;font-size:11.11px;letter-spacing:-0.20px">1.000</span>
<span class="t d" style="left:1627.3px;top:448px;letter-spacing:0.23px">Extra parameter</span>
<div class="b" style="left:1230px;top:474px;width:504px;height:1px;background:#474e55;"></div>
<div class="b" style="left:1247px;top:483px;width:140px;height:20px;background:#505860;border-radius:4px;box-shadow:inset 0 0 0 1px #40474e;"></div>
<div class="b" style="left:1367px;top:484px;width:19px;height:18px;background:#6e767e;border-radius:0 3px 3px 0;"></div>
<svg class="b" style="left:1372px;top:488px" width="10" height="9" viewBox="0 0 10 9"><polygon points="0,0 10,0 5.0,9" fill="#ffffff"/></svg>
<span class="t d" style="left:1252.0px;top:486px;letter-spacing:0.19px">Linear</span>
<span class="t d" style="left:1391.6px;top:486px;font-size:11.39px;letter-spacing:-0.20px">Curve</span>
<svg class="b" style="left:1471px;top:483px" width="11" height="22" viewBox="0 0 11 22"><rect x="0.9" y="0.6" width="8.8" height="8.8" rx="3" fill="#747c84" stroke="#40474e" stroke-width="0.9"/><rect x="0.9" y="11.6" width="8.8" height="8.8" rx="3" fill="#747c84" stroke="#40474e" stroke-width="0.9"/><path d="M2.3 5.2H8.3M5.3 2.2V8.2" stroke="#ffffff" stroke-width="1.5" fill="none"/><path d="M3.3 15.6H7.3" stroke="#ffffff" stroke-width="1.5" fill="none"/></svg>
<div class="b" style="left:1483px;top:484px;width:140px;height:20px;background:#505860;border-radius:4px;box-shadow:inset 0 0 0 1px #40474e;"></div>
<div class="b" style="left:1499px;top:486px;width:13px;height:16px;background:#a08846;border-radius:2.5px;"></div>
<span class="t d" style="left:1539.5px;top:487px;font-size:11.11px;letter-spacing:-0.20px">1.000</span>
<span class="t d" style="left:1627.7px;top:487px;letter-spacing:-0.09px">Curve Frequency</span>
<div class="b" style="left:1684px;top:517px;width:46px;height:19px;background:#6e767e;border-radius:4px;box-shadow:inset 0 0 0 1px #4b5259;"></div>
<span class="t d" style="left:1690.5px;top:519px;letter-spacing:-0.15px">Delete</span>
<div class="b" style="left:1222px;top:756px;width:523px;height:40px;background:#5e666e;border-radius:4px;box-shadow:inset 0 0 0 1px #474e55;"></div>
<div class="b" style="left:1229px;top:764px;width:191px;height:24px;background:#6e767e;border-radius:4px;box-shadow:inset 0 0 0 1px #4b5259;"></div>
<span class="t d" style="left:1234.2px;top:769px;letter-spacing:0.18px">Delete &#x27;leftupleg -&gt; LeftThigh&#x27; Link</span>
<div class="b" style="left:1654px;top:764px;width:80px;height:24px;background:#6e767e;border-radius:4px;box-shadow:inset 0 0 0 1px #4b5259;"></div>
<span class="t d" style="left:1679.4px;top:769px;letter-spacing:-0.10px">Close</span>
</section>
</body></html>
